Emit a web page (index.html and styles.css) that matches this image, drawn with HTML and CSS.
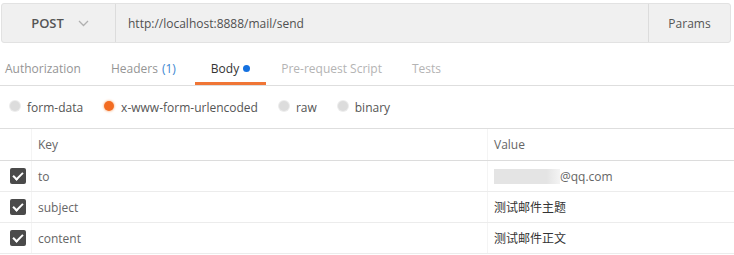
FILE: index.html
```html
<!DOCTYPE html>
<html lang="zh-CN">
<head>
    <meta charset="UTF-8">
    <title>POST mail/send</title>
    <link rel="stylesheet" href="styles.css">
</head>
<body>
    <div class="url-bar">
        <div class="method">
            POST
            <svg class="chevron" width="11" height="7" viewBox="0 0 11 7"><path d="M1 1 L5.5 5.5 L10 1" fill="none" stroke="#b0b0b0" stroke-width="1.3"/></svg>
        </div>
        <div class="url">http://localhost:8888/mail/send</div>
        <div class="params">Params</div>
    </div>

    <div class="tabs">
        <div class="tab">Authorization</div>
        <div class="tab headers">Headers <span class="count">(1)</span></div>
        <div class="tab active">Body <span class="dot"></span></div>
        <div class="tab light">Pre-request Script</div>
        <div class="tab light">Tests</div>
    </div>

    <div class="modes">
        <label class="mode"><span class="radio"></span>form-data</label>
        <label class="mode"><span class="radio on"></span>x-www-form-urlencoded</label>
        <label class="mode"><span class="radio"></span>raw</label>
        <label class="mode"><span class="radio"></span>binary</label>
    </div>

    <div class="table">
        <div class="row head">
            <div class="cell check"></div>
            <div class="cell key">Key</div>
            <div class="cell value">Value</div>
        </div>
        <div class="row">
            <div class="cell check"><span class="box"></span></div>
            <div class="cell key">to</div>
            <div class="cell value"><span class="blur"></span>@qq.com</div>
        </div>
        <div class="row">
            <div class="cell check"><span class="box"></span></div>
            <div class="cell key">subject</div>
            <div class="cell value cn">测试邮件主题</div>
        </div>
        <div class="row">
            <div class="cell check"><span class="box"></span></div>
            <div class="cell key">content</div>
            <div class="cell value cn">测试邮件正文</div>
        </div>
    </div>
</body>
</html>
```

FILE: styles.css
```css
body {
    margin: 0;
    background: #fff;
    font-family: "Open Sans", "Noto Sans CJK SC", sans-serif;
    font-size: 12px;
    color: #555;
    overflow: hidden;
}
.url-bar {
    display: flex;
    height: 38px;
    margin: 3px 3px 0 1px;
    background: #f0f0f0;
    border: 1px solid #e2e2e2;
    border-radius: 3px;
}
.method {
    width: 114px;
    display: flex;
    align-items: center;
    justify-content: center;
    gap: 14px;
    border-right: 1px solid #dcdcdc;
    font-size: 13px;
    font-weight: 600;
    color: #555;
    padding-left: 3px;
    box-sizing: border-box;
}
.url {
    flex: 1;
    display: flex;
    align-items: center;
    padding-left: 12px;
    color: #505050;
}
.params {
    width: 81px;
    display: flex;
    align-items: center;
    justify-content: center;
    border-left: 1px solid #dcdcdc;
    color: #555;
}
.tabs {
    display: flex;
    height: 43px;
    border-bottom: 1px solid #dedede;
    box-sizing: border-box;
}
.tab {
    padding: 12px 15px 0;
    border-bottom: 3px solid transparent;
    color: #959595;
    display: flex;
    align-items: center;
    gap: 4px;
}
.tab:first-child {
    padding-left: 5px;
}
.tab.headers {
    padding-right: 19px;
}
.tab.light {
    color: #b4b4b4;
}
.tab .count {
    color: #3b86d0;
}
.tab.active {
    color: #333;
    border-bottom-color: #f07535;
    padding: 12px 16px 0;
}
.dot {
    width: 7px;
    height: 7px;
    border-radius: 50%;
    background: #1471e0;
}
.modes {
    display: flex;
    align-items: center;
    gap: 21px;
    height: 43px;
    padding: 0 10px;
    border-bottom: 1px solid #dedede;
    box-sizing: border-box;
}
.mode {
    display: flex;
    align-items: center;
    gap: 7px;
    color: #555;
}
.radio {
    width: 10px;
    height: 10px;
    border-radius: 50%;
    background: #dcdcdc;
    box-shadow: 0 0 0 1px #ececec;
    margin-top: -3px;
}
.radio.on {
    background: #f26b21;
    box-shadow: 0 0 2px 1px #fbd3b7;
}
.row {
    display: flex;
    height: 30px;
    border-bottom: 1px solid #ececec;
}
.row.head {
    height: 31px;
    border-bottom-color: #dcdcdc;
}
.cell {
    display: flex;
    align-items: center;
}
.check {
    width: 32px;
    justify-content: center;
    border-right: 1px solid #f4f4f4;
    box-sizing: border-box;
    padding-left: 5px;
}
.key {
    width: 456px;
    padding-left: 6px;
    border-right: 1px solid #f4f4f4;
    box-sizing: border-box;
    color: #666;
}
.value {
    flex: 1;
    padding-left: 6px;
    color: #666;
}
.value.cn {
    color: #333;
}
.box {
    width: 16px;
    height: 16px;
    border-radius: 2px;
    background: #4a4a4a;
    position: relative;
}
.box::after {
    content: "";
    position: absolute;
    left: 5px;
    top: 2px;
    width: 4px;
    height: 8px;
    border: solid #fff;
    border-width: 0 2px 2px 0;
    transform: rotate(45deg);
}
.blur {
    width: 66px;
    height: 15px;
    background: linear-gradient(to right, #e4e4e4 80%, #f4f4f4);
}
```
